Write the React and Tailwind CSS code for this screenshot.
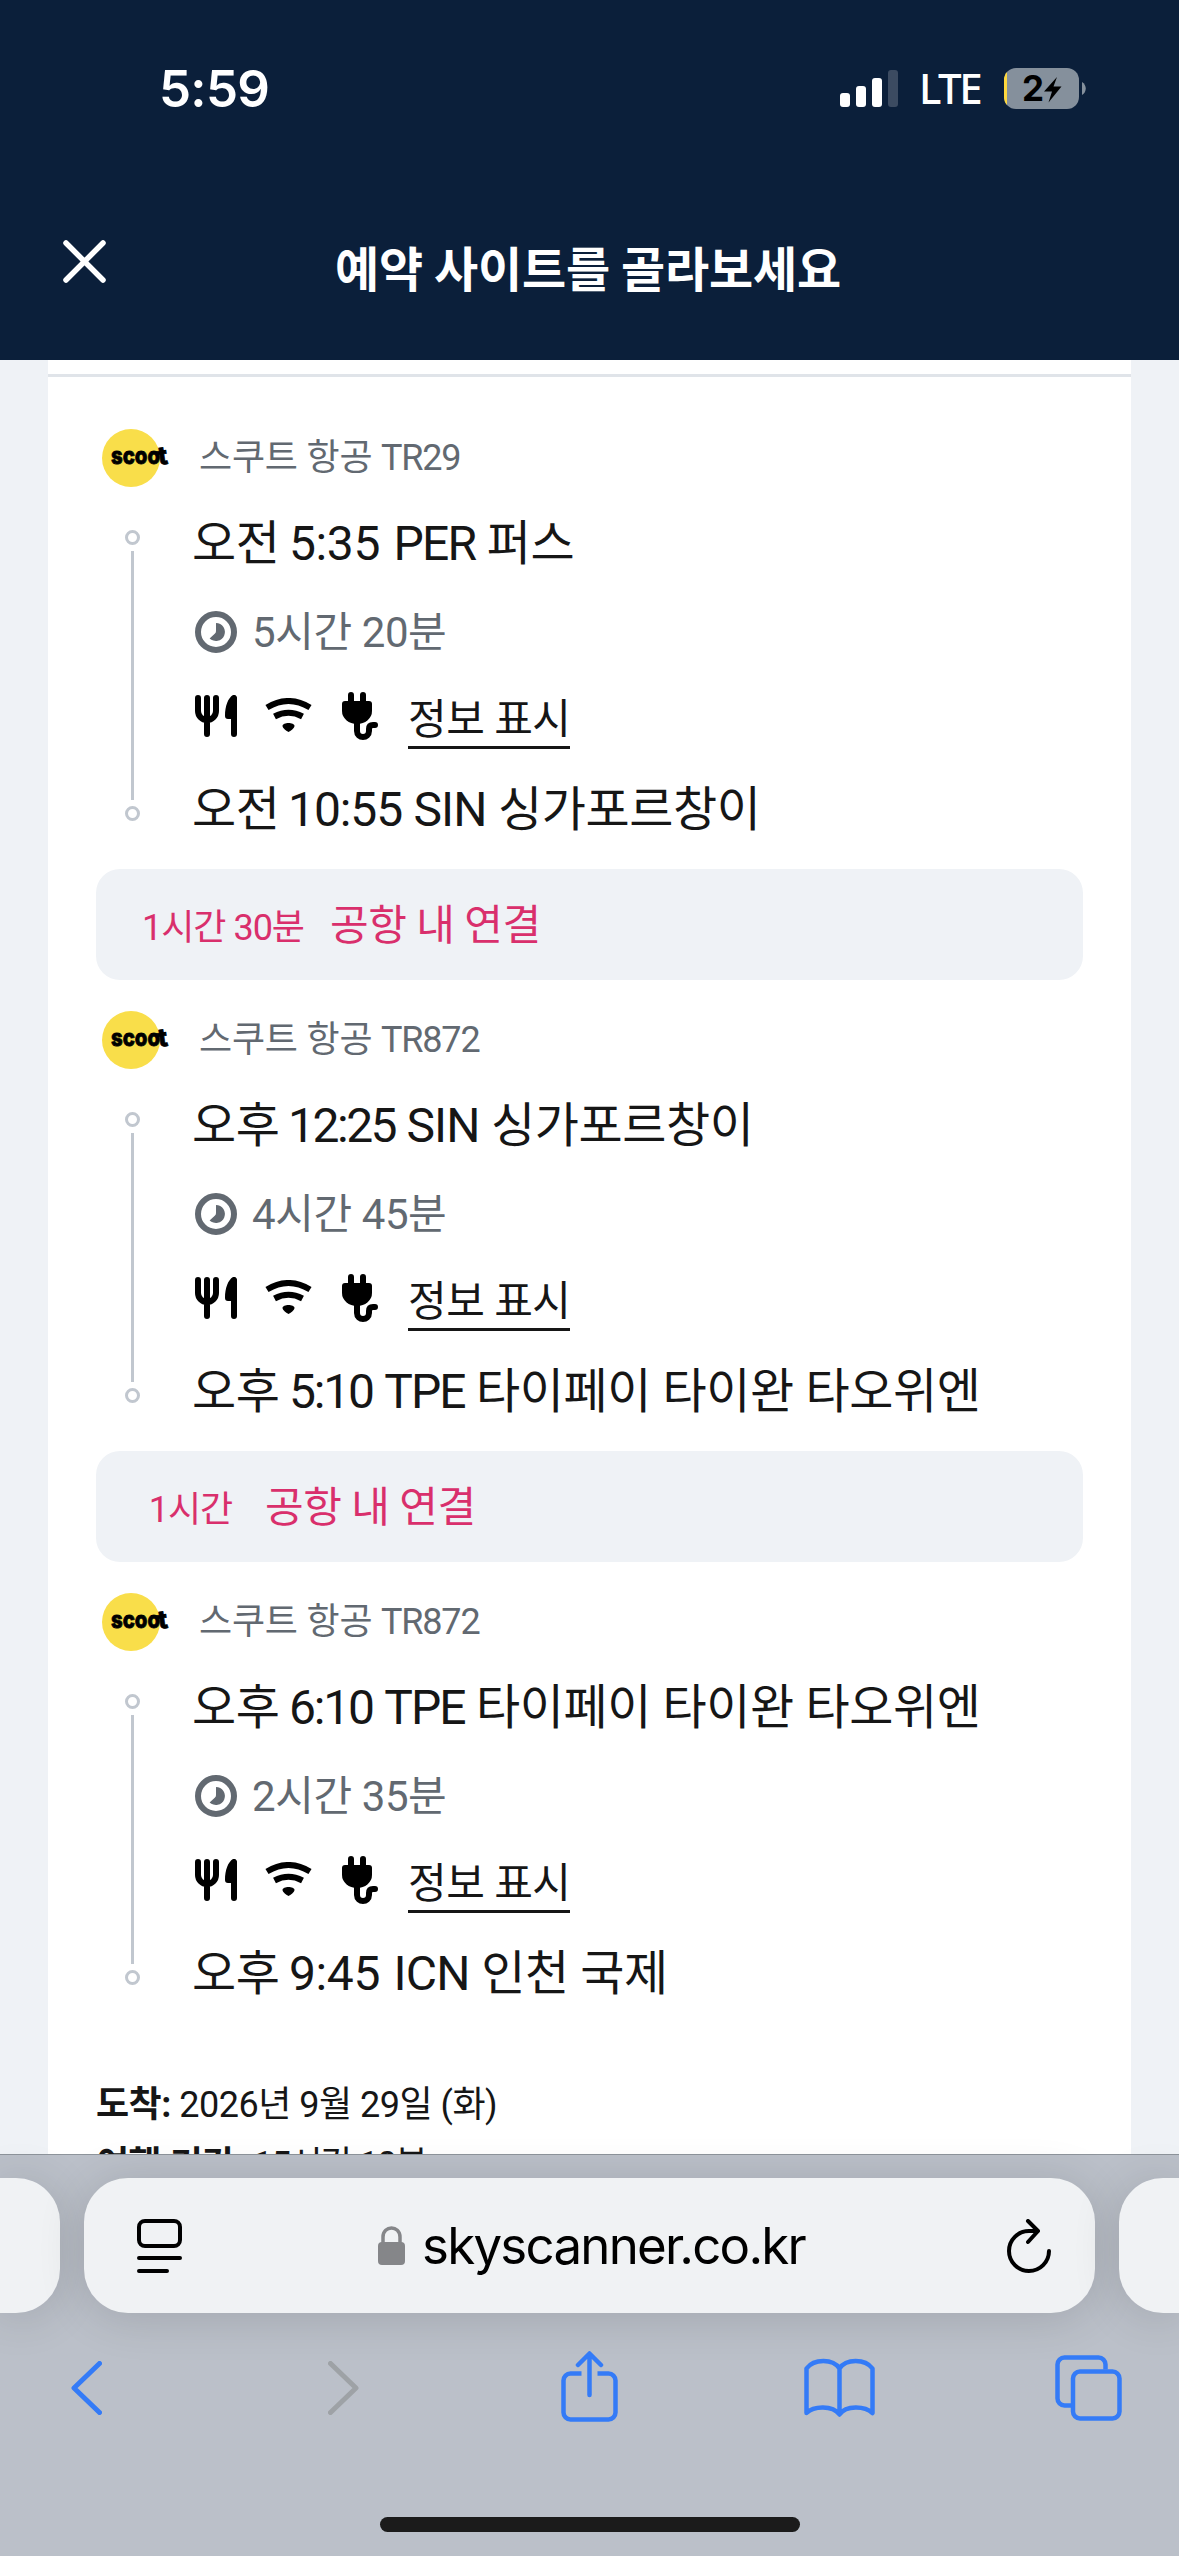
import React from 'react';

const segments = [
  {
    airline: '스쿠트 항공',
    flight: 'TR29',
    depart: { meridiem: '오전', time: '5:35', timeClass: '-ml-[2px] mr-[2px]', code: 'PER', codeClass: 'tracking-[-1.8px]', name: '퍼스' },
    duration: '5시간 20분',
    arrive: { meridiem: '오전', time: '10:55', timeClass: '-ml-[3px] tracking-[-1.1px]', code: 'SIN', codeClass: 'tracking-[-1px]', name: '싱가포르창이' },
    layover: '1시간 30분',
  },
  {
    airline: '스쿠트 항공',
    flight: 'TR872',
    depart: { meridiem: '오후', time: '12:25', timeClass: '-ml-[3px] tracking-[-2.5px]', code: 'SIN', codeClass: 'tracking-[-1px]', name: '싱가포르창이' },
    duration: '4시간 45분',
    arrive: { meridiem: '오후', time: '5:10', timeClass: '-ml-[2px] tracking-[-2.2px]', code: 'TPE', codeClass: 'tracking-[-2px]', name: '타이페이 타이완 타오위엔' },
    layover: '1시간',
  },
  {
    airline: '스쿠트 항공',
    flight: 'TR872',
    depart: { meridiem: '오후', time: '6:10', timeClass: '-ml-[2px] tracking-[-2.2px]', code: 'TPE', codeClass: 'tracking-[-2px]', name: '타이페이 타이완 타오위엔' },
    duration: '2시간 35분',
    arrive: { meridiem: '오후', time: '9:45', timeClass: '-ml-[2px] mr-[2px]', code: 'ICN', codeClass: 'tracking-[-0.8px]', name: '인천 국제' },
  },
];

const StatusBar = () => (
  <div className="flex h-[175px] items-start justify-between pl-[159px] pr-[93px]">
    <span className="mt-[58px] text-[51px] leading-[62px] font-semibold tracking-[-0.7px] text-white">5:59</span>
    <div className="mt-[67px] flex items-center">
      <svg width="58" height="37" viewBox="0 0 58 37" fill="#fff">
        <rect x="0" y="23" width="10" height="14" rx="3" />
        <rect x="16" y="16" width="10" height="21" rx="3" />
        <rect x="32" y="8" width="10" height="29" rx="3" />
        <rect x="48" y="0" width="10" height="37" rx="3" fill="#3c4b61" />
      </svg>
      <span className="ml-[21px] w-[85px] font-['Noto_Sans'] text-[42px] leading-[42px] font-medium tracking-[-2.5px] text-white">LTE</span>
      <svg width="82" height="41" viewBox="0 0 82 41">
        <defs>
          <clipPath id="battery">
            <rect width="75" height="41" rx="12" />
          </clipPath>
        </defs>
        <rect width="75" height="41" rx="12" fill="#85909c" />
        <rect width="3" height="41" fill="#ffd83d" clipPath="url(#battery)" />
        <path d="M78 14c5 3 5 10 0 13z" fill="#85909c" />
        <text x="18" y="33" fontSize="35" fontWeight="700" fontFamily="Inter">2</text>
        <path d="M53 9 40 23.500h8L44.500 34.500 57.500 18.500h-8z" />
      </svg>
    </div>
  </div>
);

const Header = () => (
  <header className="h-[360px] bg-[#0b1f3a]">
    <StatusBar />
    <div className="flex items-start px-[63px]">
      <svg className="mt-[65px]" width="43" height="43" viewBox="0 0 43 43" stroke="#fff" strokeWidth="5.500" strokeLinecap="round">
        <path d="M3 3l37 37M40 3 3 40" />
      </svg>
      <h1 className="mt-[63px] ml-[229px] text-[48px] leading-[64px] font-bold tracking-[-0.2px] whitespace-nowrap text-white">
        예약 사이트를 골라보세요
      </h1>
    </div>
  </header>
);

const ScootLogo = () => (
  <svg className="overflow-visible" width="68" height="58" viewBox="0 0 68 58">
    <circle cx="29" cy="29" r="29" fill="#f9de4a" />
    <g fontFamily="Inter" fontWeight="800" stroke="#000" strokeWidth="0.800">
      <text x="9" y="35" fontSize="24" textLength="49" lengthAdjust="spacingAndGlyphs">scoo</text>
      <text x="57" y="36" fontSize="25" transform="rotate(-8 57 36)">t</text>
    </g>
  </svg>
);

const ClockIcon = () => (
  <svg width="42" height="42" viewBox="0 0 42 42">
    <circle cx="21" cy="21" r="18" fill="none" stroke="#626971" strokeWidth="6" />
    <path d="M21 12a9 9 0 1 1-6.400 15.400L20 22.500q1-1 1-2.500z" fill="#626971" />
  </svg>
);

const MealIcon = () => (
  <svg width="42" height="42" viewBox="0 0 42 42">
    <path d="M3 3v13a9 9 0 0 0 18 0V3M12 3v36" fill="none" stroke="#000" strokeWidth="6" strokeLinecap="round" />
    <path d="M42 3v36a3 3 0 0 1-6 0V24h-3a3 3 0 0 1-3-3c0-10 3-18 8-21a3 3 0 0 1 4 3z" />
  </svg>
);

const WifiIcon = () => (
  <svg width="47" height="34" viewBox="0 0 47 34" fill="none" stroke="#000" strokeWidth="6">
    <path d="M2 9.500Q23.500-3.500 45 9.500M9.500 18.500q14-7.500 28 0" />
    <path d="M17.500 28c0-4 12-4 12 0 0 2-4 5-6 6-2-1-6-4-6-6z" fill="#000" stroke="none" />
  </svg>
);

const PlugIcon = () => (
  <svg width="36" height="48" viewBox="0 0 36 48">
    <path d="M9 3v10M21 3v10" stroke="#000" strokeWidth="6" strokeLinecap="round" />
    <path d="M3 9h24a3 3 0 0 1 3 3v7a15 13 0 0 1-30 0v-7a3 3 0 0 1 3-3z" />
    <path d="M15 30v9c0 8 12 8 12 0v-2q0-4 4-4h2" fill="none" stroke="#000" strokeWidth="6" strokeLinecap="round" />
  </svg>
);

const Stop = ({ meridiem, time, timeClass, code, codeClass, name }) => (
  <p className="h-[72px] text-[48px] leading-[72px] tracking-[-0.4px] whitespace-nowrap">
    {meridiem} <span className={timeClass}>{time}</span> <span className={codeClass}>{code}</span> {name}
  </p>
);

const Segment = ({ airline, flight, depart, duration, arrive }) => (
  <section className="h-[440px]">
    <div className="flex h-[58px] items-center pl-[6px]">
      <ScootLogo />
      <span className="ml-[29px] text-[36px] leading-[48px] tracking-[-0.2px] text-[#626971]">
        {airline} <span className="tracking-[-1.2px]">{flight}</span>
      </span>
    </div>
    <div className="flex">
      <div className="mt-[43px] ml-[29px] flex w-[15px] flex-col items-center">
        <span className="size-[15px] rounded-full border-[3px] border-[#c1c7cf]" />
        <span className="my-[6px] h-[249px] w-[3px] bg-[#c1c7cf]" />
        <span className="size-[15px] rounded-full border-[3px] border-[#c1c7cf]" />
      </div>
      <div className="ml-[52px] pt-[21px] text-[#161616]">
        <Stop {...depart} />
        <div className="mt-[31px] flex h-[42px] items-center gap-[15px] pl-[3px] text-[#626971]">
          <ClockIcon />
          <span className="mt-[2px] text-[42px] leading-[42px] tracking-[-0.4px]">{duration}</span>
        </div>
        <div className="mt-[31px] flex h-[68px] items-start pl-[3px]">
          <div className="mt-[11px]"><MealIcon /></div>
          <div className="mt-[14px] ml-[28px]"><WifiIcon /></div>
          <div className="mt-[8px] ml-[30px]"><PlugIcon /></div>
          <button className="mt-[4px] ml-[30px] h-[61px] border-b-[3px] border-[#161616] text-[42px] leading-[63px] tracking-[-0.5px]">정보 표시</button>
        </div>
        <div className="mt-[22px]">
          <Stop {...arrive} />
        </div>
      </div>
    </div>
  </section>
);

const Layover = ({ time }) => (
  <div className="flex h-[111px] items-center rounded-[24px] bg-[#eff2f6] pt-[2px] pl-[46px] text-[#d92f6c]">
    <span className="mt-[4px] min-w-[97px] text-center text-[36px] leading-[48px] tracking-[-1px]">{time}</span>
    <span className="ml-[26px] text-[42px] leading-[56px] tracking-[-0.5px]">공항 내 연결</span>
  </div>
);

const BrowserBar = () => (
  <footer className="h-[402px] border-t border-[#8e949b] bg-[#bbc0c9] font-[Inter,sans-serif]">
    <div className="flex h-[159px] items-start gap-[24px] pt-[23px]">
      <div className="h-[135px] w-[60px] rounded-r-[44px] bg-[#f0f2f4] shadow-[0_4px_48px_rgba(0,0,0,0.14)]" />
      <div className="flex h-[135px] w-[1011px] items-center rounded-[44px] bg-[#f0f2f4] pr-[44px] pl-[53px] shadow-[0_4px_48px_rgba(0,0,0,0.14)]">
        <svg width="45" height="54" viewBox="0 0 45 54" fill="none" stroke="#000" strokeWidth="4" strokeLinecap="round">
          <rect x="2" y="2" width="41" height="25" rx="6" />
          <path d="M2 39h41M2 52h28" />
        </svg>
        <svg className="ml-[196px]" width="27" height="39" viewBox="0 0 27 39">
          <rect y="16" width="27" height="23" rx="4" fill="#858689" />
          <path d="M5 18v-7c0-12 17-12 17 0v7" fill="none" stroke="#858689" strokeWidth="3.500" />
        </svg>
        <span className="ml-[17px] flex-1 text-[51px] leading-[60px] tracking-[-1.75px]">skyscanner.co.kr</span>
        <svg className="shrink-0" width="44" height="54" viewBox="0 0 44 54" fill="none" stroke="#000" strokeWidth="4" strokeLinecap="round" strokeLinejoin="round">
          <path d="M42 32a20 20 0 1 1-20-20h9M21 2l10 10-10 11" />
        </svg>
      </div>
      <div className="h-[135px] w-[60px] rounded-l-[44px] bg-[#f0f2f4] shadow-[0_4px_48px_rgba(0,0,0,0.14)]" />
    </div>
    <div className="flex h-[203px] items-start text-[#347bf7]">
      <svg className="mt-[47px] ml-[71px]" width="31" height="54" viewBox="0 0 31 54" fill="none" stroke="currentColor" strokeWidth="5" strokeLinecap="round" strokeLinejoin="round">
        <path d="M28.500 2.500 3 27l25.500 24.500" />
      </svg>
      <svg className="mt-[47px] ml-[226px]" width="31" height="54" viewBox="0 0 31 54" fill="none" stroke="#9ea2a6" strokeWidth="5" strokeLinecap="round" strokeLinejoin="round">
        <path d="M2.500 2.500 28 27 2.500 51.500" />
      </svg>
      <svg className="mt-[37px] ml-[202px]" width="57" height="71" viewBox="0 0 57 71" fill="none" stroke="currentColor" strokeWidth="4.500" strokeLinejoin="round">
        <path d="M20.500 22.500H9.500a7 7 0 0 0-7 7v32a7 7 0 0 0 7 7h38a7 7 0 0 0 7-7v-32a7 7 0 0 0-7-7h-11" />
        <path d="M28.500 44V3M17 14 28.500 2.500 40 14" strokeLinecap="round" />
      </svg>
      <svg className="mt-[44px] ml-[186px]" width="71" height="59" viewBox="0 0 71 59" fill="none" stroke="currentColor" strokeWidth="4.500" strokeLinecap="round" strokeLinejoin="round">
        <path d="M35.500 10.500C29 .5 10 .5 2.500 10.500V55c7-7 26-8 33 1.500C42 47 61 48 68.500 55V10.500C61 .5 42 .5 35.500 10.500zV56" />
      </svg>
      <svg className="mt-[41px] ml-[180px]" width="67" height="66" viewBox="0 0 67 66" fill="none" stroke="currentColor" strokeWidth="4.500">
        <path d="M16 50.500H9.500a7 7 0 0 1-7-7v-34a7 7 0 0 1 7-7h34a7 7 0 0 1 7 7v5" />
        <rect x="18" y="16.500" width="46.500" height="47" rx="7" />
      </svg>
    </div>
    <div className="mx-auto h-[15px] w-[420px] rounded-full bg-[#1b1b1b]" />
  </footer>
);

export default function App() {
  return (
    <div className="h-[2556px] w-[1179px] overflow-hidden bg-[#eff2f6] font-[Inter,'Noto_Sans_CJK_KR',sans-serif]">
      <Header />
      <main className="mx-[48px] h-[1794px] overflow-hidden bg-white font-[Roboto,'Noto_Sans_CJK_KR',sans-serif]">
        <div className="mt-[14px] h-[3px] bg-[#e0e4e9]" />
        <div className="px-[48px] pt-[52px]">
          {segments.map((segment, idx) => (
            <React.Fragment key={idx}>
              <Segment {...segment} />
              {segment.layover && (
                <div className="mb-[31px]">
                  <Layover time={segment.layover} />
                </div>
              )}
            </React.Fragment>
          ))}
          <div className="mt-[42px] text-[36px] leading-[60px] tracking-[-0.5px] text-[#161616]">
            <p><b>도착:</b> 2026년 9월 29일 (화)</p>
            <p><b>여행 기간:</b> <span className="tracking-[-2px]">15시간 10분</span></p>
          </div>
        </div>
      </main>
      <BrowserBar />
    </div>
  );
}
